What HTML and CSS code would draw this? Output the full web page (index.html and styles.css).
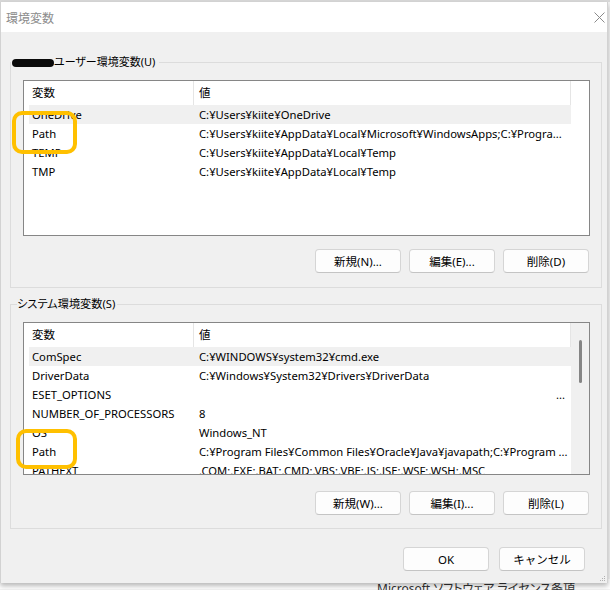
FILE: index.html
```html
<!DOCTYPE html>
<html lang="ja">
<head>
<meta charset="utf-8">
<title>環境変数</title>
<link rel="stylesheet" href="styles.css">
</head>
<body>
<div class="backdrop-top"></div>
<div class="dialog">
  <div class="titlebar">
    <span class="title">環境変数</span>
    <svg class="close" width="11" height="11" viewBox="0 0 11 11"><path d="M0.5 0.5L10.5 10.5M10.5 0.5L0.5 10.5" stroke="#8a8a8a" stroke-width="1" fill="none"/></svg>
  </div>
  <div class="content">
    <fieldset class="group group-user">
      <legend class="legend legend-user"><span class="redact"></span>ユーザー環境変数(U)</legend>
      <div class="group-body group-body-user">
        <div class="list list-user">
          <div class="rows">
            <div class="row head"><div class="cell name">変数</div><div class="cell value">値</div></div>
            <div class="row sel"><div class="cell name">OneDrive</div><div class="cell value">C:¥Users¥kiite¥OneDrive</div></div>
            <div class="row"><div class="cell name">Path</div><div class="cell value">C:¥Users¥kiite¥AppData¥Local¥Microsoft¥WindowsApps;C:¥Progra...</div></div>
            <div class="row"><div class="cell name">TEMP</div><div class="cell value">C:¥Users¥kiite¥AppData¥Local¥Temp</div></div>
            <div class="row"><div class="cell name">TMP</div><div class="cell value">C:¥Users¥kiite¥AppData¥Local¥Temp</div></div>
          </div>
          <div class="blank"></div>
        </div>
        <div class="btnrow btnrow-user">
          <button class="btn">新規(N)...</button>
          <button class="btn">編集(E)...</button>
          <button class="btn">削除(D)</button>
        </div>
      </div>
    </fieldset>
    <fieldset class="group group-system">
      <legend class="legend legend-system">システム環境変数(S)</legend>
      <div class="group-body group-body-system">
        <div class="list list-system">
          <div class="rows">
            <div class="row head"><div class="cell name">変数</div><div class="cell value">値</div></div>
            <div class="row sel"><div class="cell name">ComSpec</div><div class="cell value">C:¥WINDOWS¥system32¥cmd.exe</div></div>
            <div class="row"><div class="cell name">DriverData</div><div class="cell value">C:¥Windows¥System32¥Drivers¥DriverData</div></div>
            <div class="row"><div class="cell name">ESET_OPTIONS</div><div class="cell value value-right">...</div></div>
            <div class="row"><div class="cell name">NUMBER_OF_PROCESSORS</div><div class="cell value">8</div></div>
            <div class="row"><div class="cell name">OS</div><div class="cell value">Windows_NT</div></div>
            <div class="row"><div class="cell name">Path</div><div class="cell value">C:¥Program Files¥Common Files¥Oracle¥Java¥javapath;C:¥Program ...</div></div>
            <div class="row"><div class="cell name">PATHEXT</div><div class="cell value">.COM;.EXE;.BAT;.CMD;.VBS;.VBE;.JS;.JSE;.WSF;.WSH;.MSC</div></div>
          </div>
          <div class="scrollbar"><div class="thumb"></div></div>
        </div>
        <div class="btnrow btnrow-system">
          <button class="btn">新規(W)...</button>
          <button class="btn">編集(I)...</button>
          <button class="btn">削除(L)</button>
        </div>
      </div>
    </fieldset>
  </div>
  <div class="footer">
    <button class="btn">OK</button>
    <button class="btn">キャンセル</button>
  </div>
  <svg class="grip" width="6" height="6" viewBox="0 0 6 6"><rect x="4" y="0" width="1" height="1" fill="#b0b0b0"/><rect x="2" y="2" width="1" height="1" fill="#b0b0b0"/><rect x="4" y="2" width="1" height="1" fill="#b0b0b0"/><rect x="0" y="4" width="1" height="1" fill="#b0b0b0"/><rect x="2" y="4" width="1" height="1" fill="#b0b0b0"/><rect x="4" y="4" width="1" height="1" fill="#b0b0b0"/></svg>
</div>
<div class="behind"><span class="behind-text">Microsoft ソフトウェア ライセンス条項</span></div>
<div class="mark mark-1"></div>
<div class="mark mark-2"></div>
</body>
</html>
```

FILE: styles.css
```css
* { box-sizing: border-box; }
html, body { margin: 0; padding: 0; }
body {
  width: 610px;
  height: 590px;
  overflow: hidden;
  position: relative;
  background: #f3f3f3;
  font-family: "Noto Sans", "Noto Sans CJK JP", sans-serif;
  font-size: 11.5px;
  color: #000;
}
.backdrop-top { height: 2px; background: #d8d8d8; }
.dialog {
  position: relative;
  z-index: 1;
  width: 608px;
  background: #f0f0f0;
  border-left: 1px solid #d2d2d2;
  border-right: 1px solid #d2d2d2;
  box-shadow: 0 3px 5px rgba(0, 0, 0, 0.28);
  display: flex;
  flex-direction: column;
}
.titlebar {
  height: 30px;
  background: #ffffff;
  display: flex;
  align-items: center;
  justify-content: space-between;
  padding: 0 2px 0 5px;
}
.title {
  font-family: "Noto Sans CJK JP", sans-serif;
  font-size: 12px;
  color: #8c8c8c;
}
.close { display: block; }
.content { padding: 22px 5px 0 9px; }
.group {
  margin: 0;
  padding: 0;
  min-width: 0;
  border: 1px solid #dcdcdc;
}
.group-system { margin-top: 8px; }
.legend {
  padding: 0 3px 0 0;
  line-height: 16px;
  font-size: 11px;
  font-feature-settings: "palt";
  white-space: nowrap;
}
.legend-user { padding-right: 4px; }
.legend-system { margin-left: 6px; padding-right: 2px; font-size: 11.2px; }
.redact {
  display: inline-block;
  width: 42px;
  height: 8px;
  margin-left: 1px;
  background: #0a0a0a;
  border-radius: 4px;
  vertical-align: middle;
}
.group-body { padding: 10px 11px 14px 12px; }
.group-body-system { padding-bottom: 13px; }
.list {
  display: flex;
  border: 1px solid #868686;
  background: #ffffff;
  overflow: hidden;
}
.list-user { height: 156px; }
.list-system { height: 153px; }
.rows {
  width: 547px;
  flex: none;
  padding-left: 5px;
  overflow: hidden;
}
.row {
  display: grid;
  grid-template-columns: 165px 377px;
  height: 19px;
  line-height: 19px;
  white-space: nowrap;
  font-size: 11.25px;
}
.row.head { height: 24px; line-height: 24px; font-size: 11.5px; }
.head .cell { border-right: 1px solid #e5e5e5; }
.cell { overflow: hidden; }
.cell.name { padding-left: 3px; }
.cell.value { padding-left: 5px; }
.cell.value-right { text-align: right; padding-right: 6px; }
.sel { background: #f0f0f0; }
.blank { flex: 1; }
.scrollbar {
  flex: 1;
  background: #f0f0f0;
  display: flex;
  justify-content: center;
  padding-top: 17px;
}
.thumb {
  width: 3px;
  height: 43px;
  background: #858585;
  border-radius: 2px;
}
.btnrow {
  display: flex;
  justify-content: flex-end;
  gap: 8px;
  padding-right: 1px;
}
.btnrow-user { margin-top: 13px; }
.btnrow-system { margin-top: 16px; }
.btn {
  width: 86px;
  height: 24px;
  padding: 0;
  margin: 0;
  background: #fdfdfd;
  border: 1px solid #d5d5d5;
  border-bottom-color: #c4c4c4;
  border-radius: 4px;
  font-family: "Noto Sans", "Noto Sans CJK JP", sans-serif;
  font-size: 11.5px;
  color: #000;
  display: flex;
  align-items: center;
  justify-content: center;
}
.footer {
  display: flex;
  justify-content: flex-end;
  gap: 10px;
  padding: 18px 22px 12px 0;
}
.grip {
  position: absolute;
  right: 1px;
  bottom: 1px;
}
.behind {
  height: 10px;
  margin-top: -4px;
  padding-left: 377px;
  background: #ffffff;
}
.behind-text {
  font-family: "Noto Sans", "Noto Sans CJK JP", sans-serif;
  font-size: 12px;
  line-height: 20px;
  color: #333;
  white-space: nowrap;
  font-feature-settings: "palt";
}
.mark {
  position: absolute;
  z-index: 5;
  border: 4px solid #ffc000;
  border-radius: 10px;
}
.mark-1 { left: 12px; top: 111px; width: 65px; height: 43px; }
.mark-2 { left: 16px; top: 429px; width: 61px; height: 40px; }
```
